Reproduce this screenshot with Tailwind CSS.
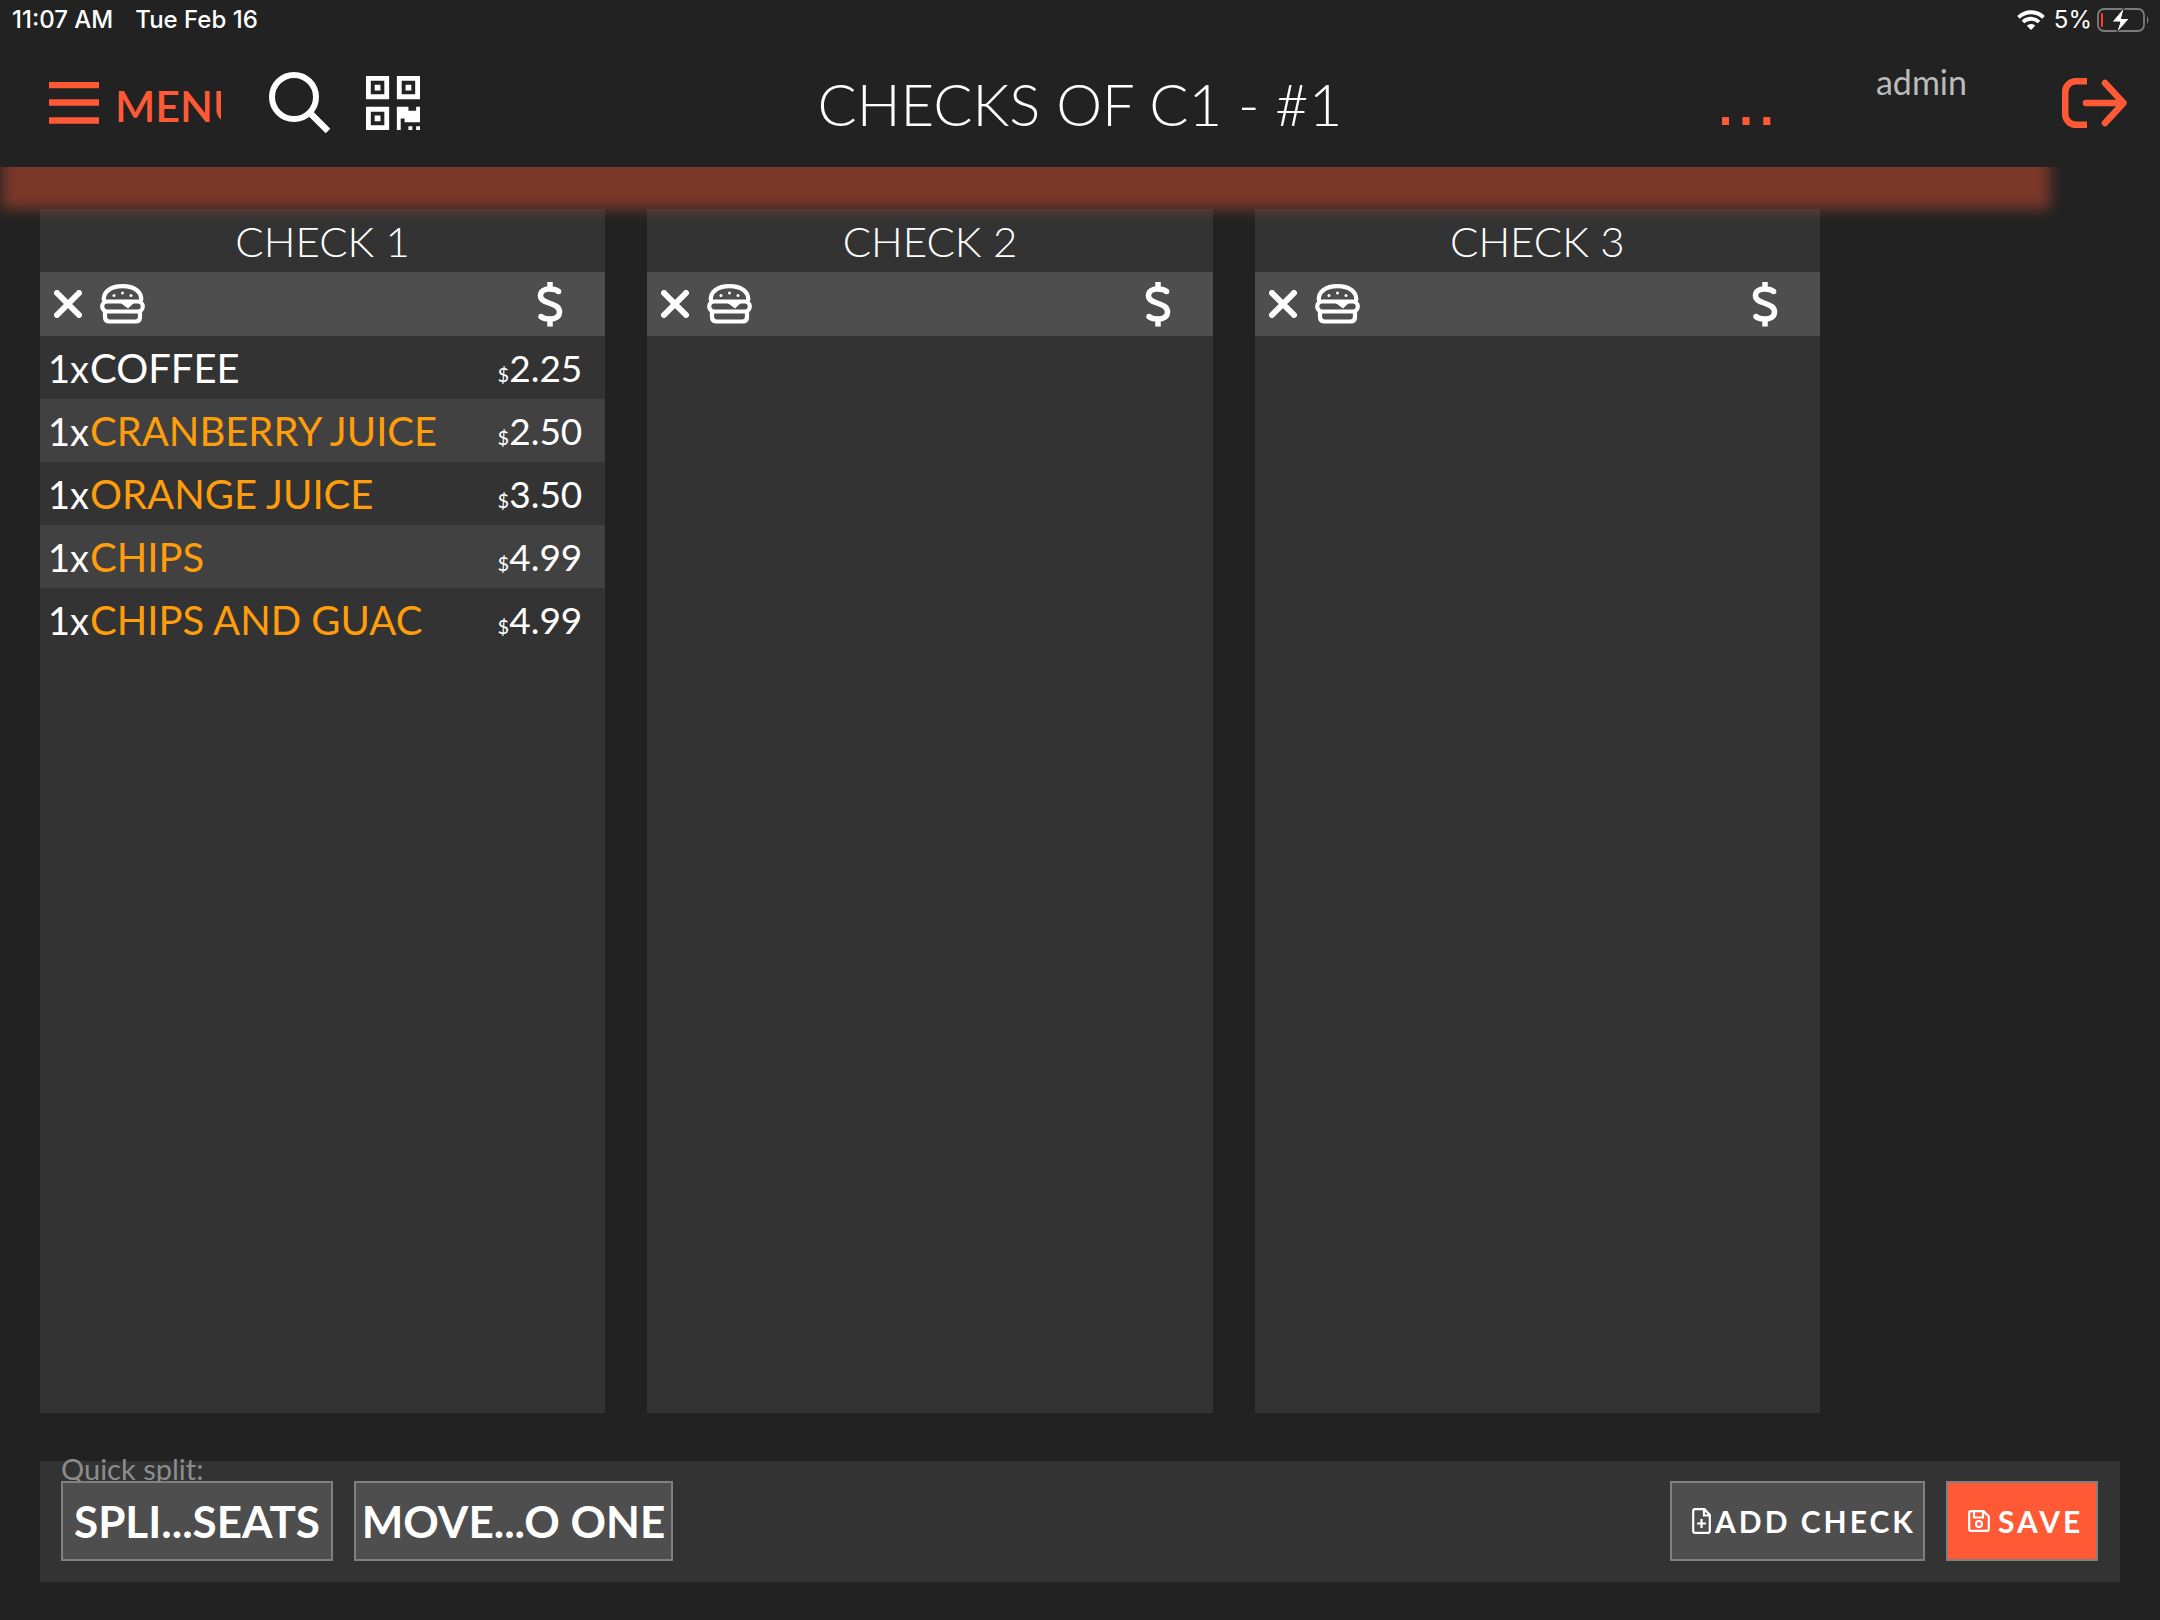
<!DOCTYPE html>
<html lang="en">
<head>
<meta charset="utf-8">
<meta name="viewport" content="width=device-width, initial-scale=1">
<title>Checks of C1 - #1</title>
<script src="https://cdn.jsdelivr.net/npm/@tailwindcss/browser@4"></script>
</head>
<body class="bg-[#222] text-white font-['Lato',sans-serif]">
<svg class="hidden" aria-hidden="true">
  <symbol id="close" viewBox="0 0 28 28"><path d="M3 3 25 25M25 3 3 25" fill="none" stroke="currentColor" stroke-width="6" stroke-linecap="round"/></symbol>
  <symbol id="burger" viewBox="0 0 45 40">
    <g fill="none" stroke="currentColor" stroke-width="4.2">
      <path d="M4 17C2.500 8 10.500 2.200 22.500 2.200S42.500 8 41 17"/>
      <rect x="2.200" y="17.500" width="40.600" height="10" rx="5"/>
      <path d="M5 28v5q0 4.500 4.500 4.500h26q4.500 0 4.500-4.500v-5"/>
    </g>
    <path d="M18 17h18l-8 7.500Z" fill="currentColor"/>
    <g fill="currentColor"><circle cx="14" cy="11.500" r="1.500"/><circle cx="22.500" cy="9" r="1.500"/><circle cx="31" cy="11.500" r="1.500"/></g>
  </symbol>
  <symbol id="dollar" viewBox="0 0 26 46"><path d="M21.500 10.500C19 8.300 16 8 12.500 8 7 8 3.500 10.500 3.500 14.500c0 4 3 5.500 8.500 7.500 6.500 2.200 10.500 4 10.500 9 0 4.500-4 7-9.500 7-4 0-7-.5-9-2.500M13 1v7M13 38v7.500" fill="none" stroke="currentColor" stroke-width="5.500" stroke-linejoin="round"/><path d="M21.500 10.500h.1M4 35.500h.1" stroke="currentColor" stroke-width="5.500" stroke-linecap="round"/></symbol>
</svg>

<div class="flex min-h-screen flex-col">
  <header class="relative z-20 h-[167px] bg-[#222]">
    <div class="flex h-10 items-center justify-between pl-3 pr-[10px] font-['Inter',sans-serif] text-[24px] font-medium">
      <div class="flex gap-[22px]"><span>11:07 AM</span><span>Tue Feb 16</span></div>
      <div class="flex items-center">
        <svg class="mr-[9px] h-5 w-7" viewBox="0 0 28 20" role="img" aria-label="Wi-Fi"><g fill="none" stroke="white" stroke-width="3.800"><path d="M1.500 7.300a18 18 0 0 1 25 0"/><path d="M6 12a11.500 11.500 0 0 1 16 0"/></g><path d="M14 20l-4.200-4.300a6 6 0 0 1 8.400 0Z" fill="white"/></svg>
        <span class="mr-[5px] font-normal">5%</span>
        <svg class="h-6 w-[53px]" viewBox="0 0 53 24" role="img" aria-label="Battery charging"><rect x="1" y="1" width="46" height="22" rx="6" fill="none" stroke="#7d7d7d" stroke-width="1.800"/><path d="M50 8q3 4 0 8Z" fill="#7d7d7d"/><rect x="4" y="5" width="2" height="14" rx="1" fill="#ff3b30"/><path d="M27.500-1 15 14h8l-3.500 11L32.500 10.500h-8Z" fill="white" stroke="#222" stroke-width="1"/></svg>
      </div>
    </div>
    <div class="grid grid-cols-[1fr_auto_1fr] px-12">
      <div class="flex h-32 items-start">
        <button type="button" class="mt-[38px] flex w-[173px] items-center gap-[15px] overflow-hidden text-[43px] leading-[56px] font-semibold text-[#ff5935]">
          <svg class="mb-1.5 h-[42px] w-[52px] shrink-0" viewBox="0 0 52 42"><path d="M1 3h50M1 20.500h50M1 38.500h50" stroke="currentColor" stroke-width="6.500"/></svg>
          <span>MENU</span>
        </button>
        <button type="button" aria-label="Search" class="mt-8 ml-12"><svg class="h-[62px] w-[62px]" viewBox="0 0 62 62" fill="none" stroke="white"><circle cx="25" cy="25" r="22" stroke-width="6"/><path d="M41 41 59 59" stroke-width="6.500"/></svg></button>
        <button type="button" aria-label="Scan code" class="mt-9 ml-[35px]"><svg class="h-[54px] w-[54px]" viewBox="0 0 28 28" fill="white"><path fill-rule="evenodd" d="M0 0h12v12H0ZM2.500 2.500v7h7v-7ZM16 0h12v12H16ZM18.500 2.500v7h7v-7ZM0 16h12v12H0ZM2.500 18.500v7h7v-7Z"/><path d="M4.500 4.500h3v3h-3ZM20.500 4.500h3v3h-3ZM4.500 20.500h3v3h-3ZM16 16h6v2h4v-2h2v8h-8v-2h-2v6h-2ZM22 26h2v2h-2ZM26 26h2v2h-2Z"/></svg></button>
      </div>
      <h1 class="pt-7 text-[58px] leading-[72px] font-light">CHECKS OF C1 - #1</h1>
      <div class="-mr-[15px] flex items-start justify-end">
        <button type="button" aria-label="More" class="mt-5 mr-[99px] font-['Liberation_Sans',sans-serif] text-[74px] leading-[80px] text-[#ff5935]">...</button>
        <span class="mt-5 mr-[95px] text-[34px] leading-[44px] text-[#bbb]">admin</span>
        <button type="button" aria-label="Log out" class="mt-[38px]"><svg class="h-[50px] w-[65px]" viewBox="0 0 65 50" fill="none" stroke="#ff5935" stroke-width="6.500"><path d="M25 3.200H14A10.800 10.800 0 0 0 3.200 14v22A10.800 10.800 0 0 0 14 46.800h11"/><path d="M24 25h37M43 5 61.500 25 43 45" stroke-linecap="round" stroke-linejoin="round"/></svg></button>
      </div>
    </div>
  </header>

  <main class="relative flex flex-1 flex-col px-10 pt-[42px] pb-[38px]">
    <div class="pointer-events-none absolute -top-5 left-0.5 right-[110px] z-10 h-[62px] bg-[#ff5935]/40 blur-[7px]"></div>
    <div class="grid flex-1 grid-cols-3 gap-[42px] pr-[300px]">
      <section class="bg-[#333]">
        <h2 class="h-[63px] text-center text-[42px] leading-[64px] font-light">CHECK 1</h2>
        <div class="flex h-16 items-center bg-[#4e4e4e] pl-[14px] pr-[42px]">
          <button type="button" aria-label="Remove check 1"><svg class="h-7 w-7"><use href="#close"/></svg></button>
          <button type="button" aria-label="Items of check 1" class="ml-[18px]"><svg class="h-10 w-[45px]"><use href="#burger"/></svg></button>
          <button type="button" aria-label="Pay check 1" class="ml-auto"><svg class="h-[46px] w-[26px]"><use href="#dollar"/></svg></button>
        </div>
        <table class="w-full text-[40px] leading-[60px]">
          <tbody>
            <tr class="h-[63px]"><td class="w-[50px] p-0 pl-2 text-[38px]">1x</td><td class="p-0">COFFEE</td><td class="p-0 pr-[23px] text-right text-[37px]"><span class="text-[20px] leading-none">$</span>2.25</td></tr>
            <tr class="h-[63px] bg-[#414141]"><td class="p-0 pl-2 text-[38px]">1x</td><td class="p-0 text-[#ff9d0a]">CRANBERRY JUICE</td><td class="p-0 pr-[23px] text-right text-[37px]"><span class="text-[20px] leading-none">$</span>2.50</td></tr>
            <tr class="h-[63px]"><td class="p-0 pl-2 text-[38px]">1x</td><td class="p-0 text-[#ff9d0a]">ORANGE JUICE</td><td class="p-0 pr-[23px] text-right text-[37px]"><span class="text-[20px] leading-none">$</span>3.50</td></tr>
            <tr class="h-[63px] bg-[#414141]"><td class="p-0 pl-2 text-[38px]">1x</td><td class="p-0 text-[#ff9d0a]">CHIPS</td><td class="p-0 pr-[23px] text-right text-[37px]"><span class="text-[20px] leading-none">$</span>4.99</td></tr>
            <tr class="h-[63px]"><td class="p-0 pl-2 text-[38px]">1x</td><td class="p-0 text-[#ff9d0a]">CHIPS AND GUAC</td><td class="p-0 pr-[23px] text-right text-[37px]"><span class="text-[20px] leading-none">$</span>4.99</td></tr>
          </tbody>
        </table>
      </section>
      <section class="bg-[#333]">
        <h2 class="h-[63px] text-center text-[42px] leading-[64px] font-light">CHECK 2</h2>
        <div class="flex h-16 items-center bg-[#4e4e4e] pl-[14px] pr-[42px]">
          <button type="button" aria-label="Remove check 2"><svg class="h-7 w-7"><use href="#close"/></svg></button>
          <button type="button" aria-label="Items of check 2" class="ml-[18px]"><svg class="h-10 w-[45px]"><use href="#burger"/></svg></button>
          <button type="button" aria-label="Pay check 2" class="ml-auto"><svg class="h-[46px] w-[26px]"><use href="#dollar"/></svg></button>
        </div>
      </section>
      <section class="bg-[#333]">
        <h2 class="h-[63px] text-center text-[42px] leading-[64px] font-light">CHECK 3</h2>
        <div class="flex h-16 items-center bg-[#4e4e4e] pl-[14px] pr-[42px]">
          <button type="button" aria-label="Remove check 3"><svg class="h-7 w-7"><use href="#close"/></svg></button>
          <button type="button" aria-label="Items of check 3" class="ml-[18px]"><svg class="h-10 w-[45px]"><use href="#burger"/></svg></button>
          <button type="button" aria-label="Pay check 3" class="ml-auto"><svg class="h-[46px] w-[26px]"><use href="#dollar"/></svg></button>
        </div>
      </section>
    </div>

    <div class="relative mt-12 flex gap-[21px] bg-[#333] pl-[21px] pr-[22px] pt-5 pb-[21px]">
      <div class="absolute -top-2.5 left-[21px] text-[29px] leading-[36px] text-[#8c8c8c]">Quick split:</div>
      <button type="button" class="relative h-20 w-[272px] border-2 border-[#808080] bg-[#4e4e4e] text-[44px] leading-[76px] font-bold">SPLI...SEATS</button>
      <button type="button" class="relative h-20 w-[319px] border-2 border-[#808080] bg-[#4e4e4e] text-[44px] leading-[76px] font-bold">MOVE...O ONE</button>
      <button type="button" class="ml-auto flex h-20 w-[255px] items-center gap-1 border-2 border-[#808080] bg-[#4e4e4e] pl-5 text-[30px] font-bold tracking-[3px] whitespace-nowrap">
        <svg class="h-[26px] w-[19px] shrink-0" viewBox="0 0 19 26" fill="none" stroke="currentColor" stroke-width="2.200"><path d="M3 1.200h9.500L17.800 7v16q0 1.800-1.800 1.800H3q-1.800 0-1.800-1.800V3q0-1.800 1.800-1.800ZM12 1v6.500h6M9.500 11v9M5 15.500h9"/></svg>ADD CHECK
      </button>
      <button type="button" class="flex h-20 w-[152px] items-center gap-2 border-2 border-[#808080] bg-[#ff5935] pl-5 text-[30px] font-bold tracking-[3px]">
        <svg class="h-[22px] w-[22px] shrink-0" viewBox="0 0 22 22" fill="none" stroke="currentColor" stroke-width="2.200"><path d="M3 1.200h12.500l5.300 5.300V19q0 1.800-1.800 1.800H3q-1.800 0-1.800-1.800V3q0-1.800 1.800-1.800ZM6 1v6.500h9V1"/><circle cx="11" cy="14" r="3"/></svg>SAVE
      </button>
    </div>
  </main>
</div>
</body>
</html>
